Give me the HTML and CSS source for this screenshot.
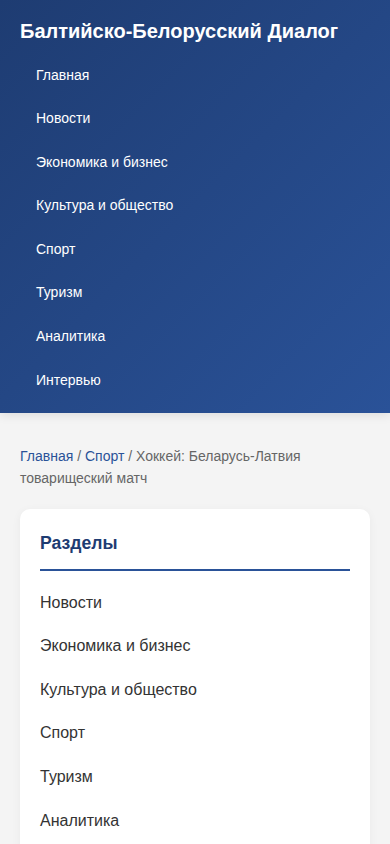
FILE: index.html
```html
<!DOCTYPE html>
<html lang="ru">
<head>
  <meta charset="UTF-8">
  <meta name="viewport" content="width=device-width, initial-scale=1.0">
  <title>Хоккей: Беларусь-Латвия товарищеский матч</title>
  <link rel="stylesheet" href="styles.css">
</head>
<body>

  <header class="site-header">
    <h1 class="logo">Балтийско-Белорусский Диалог</h1>
    <nav>
      <ul class="main-nav">
        <li><a href="#">Главная</a></li>
        <li><a href="#">Новости</a></li>
        <li><a href="#">Экономика и бизнес</a></li>
        <li><a href="#">Культура и общество</a></li>
        <li><a href="#">Спорт</a></li>
        <li><a href="#">Туризм</a></li>
        <li><a href="#">Аналитика</a></li>
        <li><a href="#">Интервью</a></li>
      </ul>
    </nav>
  </header>

  <main class="content">
    <div class="breadcrumb">
      <a href="#">Главная</a> / <a href="#">Спорт</a> / Хоккей: Беларусь-Латвия товарищеский матч
    </div>

    <aside class="sidebar">
      <h3>Разделы</h3>
      <ul class="sidebar-list">
        <li><a href="#">Новости</a></li>
        <li><a href="#">Экономика и бизнес</a></li>
        <li><a href="#">Культура и общество</a></li>
        <li><a href="#">Спорт</a></li>
        <li><a href="#">Туризм</a></li>
        <li><a href="#">Аналитика</a></li>
        <li><a href="#">Интервью</a></li>
      </ul>
    </aside>
  </main>

</body>
</html>
```

FILE: styles.css
```css
* {
  margin: 0;
  padding: 0;
  box-sizing: border-box;
}
body {
  font-family: "Liberation Sans", Arial, sans-serif;
  line-height: 1.6;
  color: #333;
  background-color: #f4f4f4;
}
a {
  text-decoration: none;
}
.site-header {
  background: linear-gradient(135deg, #1e3c72 0%, #2a5298 100%);
  color: #fff;
  padding: 15px 20px 11px;
  box-shadow: 0 2px 10px rgba(0, 0, 0, 0.1);
}
.logo {
  font-size: 20px;
  font-weight: bold;
  margin-bottom: 6px;
}
.main-nav {
  list-style: none;
}
.main-nav a {
  display: block;
  color: #fff;
  font-size: 14px;
  padding: 10.6px 16px;
}
.content {
  padding: 32px 20px 20px;
}
.breadcrumb {
  font-size: 14px;
  color: #666;
  margin-bottom: 20px;
}
.breadcrumb a {
  color: #2a5298;
}
.sidebar {
  background-color: #fff;
  border-radius: 10px;
  padding: 20px;
  box-shadow: 0 2px 10px rgba(0, 0, 0, 0.05);
}
.sidebar h3 {
  color: #1e3c72;
  font-size: 17.6px;
  padding-bottom: 11px;
  border-bottom: 2px solid #2a5298;
  margin-bottom: 10px;
}
.sidebar-list {
  list-style: none;
}
.sidebar-list a {
  display: block;
  color: #333;
  font-size: 16px;
  padding: 9px 0;
}
```
